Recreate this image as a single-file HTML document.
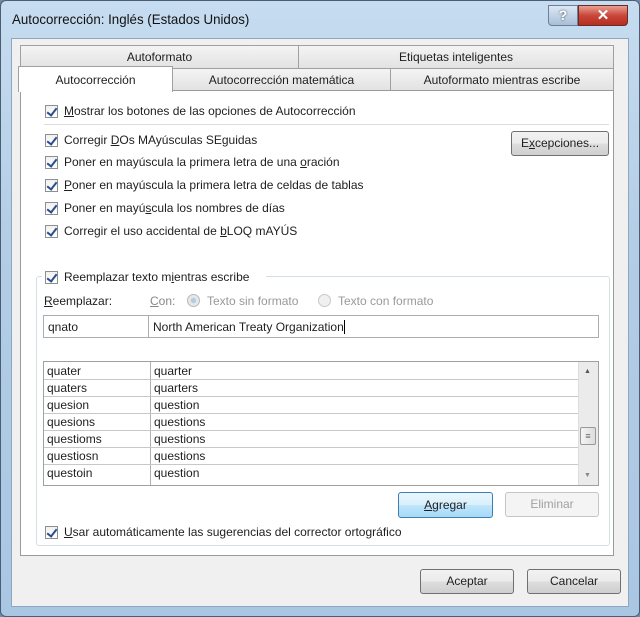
<!DOCTYPE html>
<html><head><meta charset="utf-8"><style>
*{box-sizing:border-box;margin:0;padding:0}
body{width:640px;height:617px;overflow:hidden;background:#6f8aa8;font-family:"Liberation Sans",sans-serif;font-size:12px;color:#1e1e1e;position:relative}
.a{position:absolute}
.win{left:0;top:0;width:640px;height:617px;background:linear-gradient(180deg,#c6dcf0 0%,#b3cde6 40%,#a9c6e3 100%);border:1px solid #4b5d73;border-radius:6px}
.body{left:11px;top:38px;width:618px;height:569px;background:#f0f0f0;border:1px solid #8fa6bf}
.tab{position:absolute;background:linear-gradient(#f4f4f4,#e2e2e2);border:1px solid #a0a0a0;text-align:center;line-height:23px;font-size:12px}
.panel{left:20px;top:90px;width:594px;height:466px;background:#fff;border:1px solid #9a9a9a}
.cb{position:absolute;width:13px;height:13px;border:1px solid #8e8f8f;background:linear-gradient(#f0f0f0,#fff);}
.cb:after{content:"";position:absolute;left:3px;top:0px;width:4px;height:8px;border:solid #2b4e8c;border-width:0 2px 2px 0;transform:rotate(38deg)}
.lbl{position:absolute;font-size:12px;white-space:nowrap}
.btn{position:absolute;border:1px solid #707070;border-radius:3px;background:linear-gradient(#f2f2f2 0%,#ebebeb 50%,#dddddd 51%,#cfcfcf 100%);text-align:center;font-size:12px}
u{text-decoration:underline}
.row{position:absolute;left:0;width:534px;height:17px;border-bottom:1px solid #c8c8c8;font-size:12px;line-height:16px}
.row span{position:absolute;top:0}
</style></head><body>
<div class="a win"></div>
<div class="a" style="left:12px;top:11px;font-size:14px;color:#111;transform:scaleX(0.95);transform-origin:left">Autocorrección: Inglés (Estados Unidos)</div>
<div class="a" style="left:548px;top:5px;width:30px;height:21px;border:1px solid #6c7f96;border-radius:0 0 0 4px;background:linear-gradient(#dbe7f4,#a9bfd8);color:#fff;text-align:center;font-weight:bold;font-size:14px;line-height:19px;text-shadow:0 0 2px #345">?</div>
<div class="a" style="left:578px;top:5px;width:50px;height:21px;border:1px solid #6b2a22;border-radius:0 0 4px 0;background:linear-gradient(#e8a093,#c9463a 50%,#b52e20);color:#fff;text-align:center;font-weight:bold;font-size:15px;line-height:19px">✕</div>
<div class="a body"></div>
<div class="tab" style="left:20px;top:45px;width:279px;height:24px">Autoformato</div>
<div class="tab" style="left:298px;top:45px;width:316px;height:24px">Etiquetas inteligentes</div>
<div class="tab" style="left:172px;top:68px;width:219px;height:23px">Autocorrección matemática</div>
<div class="tab" style="left:390px;top:68px;width:224px;height:23px">Autoformato mientras escribe</div>
<div class="a panel"></div>
<div class="tab" style="left:18px;top:66px;width:155px;height:26px;background:#fff;border-bottom:none;line-height:27px">Autocorrección</div>

<div class="cb" style="left:45px;top:105px"></div><div class="lbl" style="left:64px;top:104px"><u>M</u>ostrar los botones de las opciones de Autocorrección</div>
<div class="a" style="left:44px;top:124px;width:565px;height:1px;background:#dcdcdc"></div>
<div class="cb" style="left:45px;top:134px"></div><div class="lbl" style="left:64px;top:133px">Corregir <u>D</u>Os MAyúsculas SEguidas</div>
<div class="cb" style="left:45px;top:156px"></div><div class="lbl" style="left:64px;top:155px">Poner en mayúscula la primera letra de una <u>o</u>ración</div>
<div class="cb" style="left:45px;top:179px"></div><div class="lbl" style="left:64px;top:178px"><u>P</u>oner en mayúscula la primera letra de celdas de tablas</div>
<div class="cb" style="left:45px;top:202px"></div><div class="lbl" style="left:64px;top:201px">Poner en mayú<u>s</u>cula los nombres de días</div>
<div class="cb" style="left:45px;top:225px"></div><div class="lbl" style="left:64px;top:224px">Corregir el uso accidental de <u>b</u>LOQ mAYÚS</div>
<div class="btn" style="left:511px;top:131px;width:98px;height:25px;line-height:23px">E<u>x</u>cepciones...</div>

<div class="a" style="left:36px;top:276px;width:574px;height:270px;border:1px solid #d5dfe5;border-radius:3px"></div>
<div class="a" style="left:42px;top:268px;width:224px;height:16px;background:#fff"></div>
<div class="cb" style="left:45px;top:271px"></div><div class="lbl" style="left:64px;top:270px">Reemplazar texto m<u>i</u>entras escribe</div>
<div class="lbl" style="left:44px;top:294px"><u>R</u>eemplazar:</div>
<div class="lbl" style="left:150px;top:294px;color:#888"><u>C</u>on:</div>
<div class="a" style="left:187px;top:294px;width:13px;height:13px;border-radius:50%;border:1px solid #b8b8b8;background:radial-gradient(#b4cde0 30%,#e8e8e8 40%)"></div>
<div class="lbl" style="left:207px;top:294px;color:#999">Texto sin formato</div>
<div class="a" style="left:318px;top:294px;width:13px;height:13px;border-radius:50%;border:1px solid #c8c8c8;background:#f0f0f0"></div>
<div class="lbl" style="left:338px;top:294px;color:#999">Texto con formato</div>
<div class="a" style="left:43px;top:315px;width:106px;height:23px;border:1px solid #abadb3;padding:4px 4px;line-height:14px">qnato</div>
<div class="a" style="left:148px;top:315px;width:451px;height:23px;border:1px solid #abadb3;padding:4px 4px;line-height:14px">North American Treaty Organization<span style="display:inline-block;width:1px;height:14px;background:#000;vertical-align:top"></span></div>

<div class="a" style="left:43px;top:361px;width:556px;height:125px;border:1px solid #a0a0a0;overflow:hidden">
<div class="a" style="left:106px;top:0;width:1px;height:125px;background:#b0b0b0"></div>
<div class="row" style="top:1px"><span style="left:3px">quater</span><span style="left:110px">quarter</span></div>
<div class="row" style="top:18px"><span style="left:3px">quaters</span><span style="left:110px">quarters</span></div>
<div class="row" style="top:35px"><span style="left:3px">quesion</span><span style="left:110px">question</span></div>
<div class="row" style="top:52px"><span style="left:3px">quesions</span><span style="left:110px">questions</span></div>
<div class="row" style="top:69px"><span style="left:3px">questioms</span><span style="left:110px">questions</span></div>
<div class="row" style="top:86px"><span style="left:3px">questiosn</span><span style="left:110px">questions</span></div>
<div class="row" style="top:103px;border:none"><span style="left:3px">questoin</span><span style="left:110px">question</span></div>
<div class="a" style="left:534px;top:0;width:21px;height:123px;background:#ebebeb;border-left:1px solid #ddd"></div>
<div class="a" style="left:540px;top:6px;font-size:7px;color:#555">▲</div>
<div class="a" style="left:536px;top:65px;width:16px;height:18px;border:1px solid #999;border-radius:2px;background:linear-gradient(90deg,#f4f4f4,#ddd);font-size:9px;text-align:center;line-height:16px;color:#666">≡</div>
<div class="a" style="left:540px;top:110px;font-size:7px;color:#888">▼</div>
</div>

<div class="btn" style="left:398px;top:492px;width:95px;height:26px;line-height:24px;border-color:#3c7fb1;background:linear-gradient(#eaf6fd,#d9f0fc 50%,#bee6fd 51%,#a7d9f5)"><u>A</u>gregar</div>
<div class="btn" style="left:505px;top:492px;width:94px;height:25px;line-height:23px;border-color:#c5c5c5;background:#f4f4f4;color:#a0a0a0">Eliminar</div>
<div class="cb" style="left:45px;top:526px"></div><div class="lbl" style="left:64px;top:525px"><u>U</u>sar automáticamente las sugerencias del corrector ortográfico</div>

<div class="btn" style="left:420px;top:569px;width:94px;height:25px;line-height:23px">Aceptar</div>
<div class="btn" style="left:527px;top:569px;width:94px;height:25px;line-height:23px">Cancelar</div>
</body></html>
